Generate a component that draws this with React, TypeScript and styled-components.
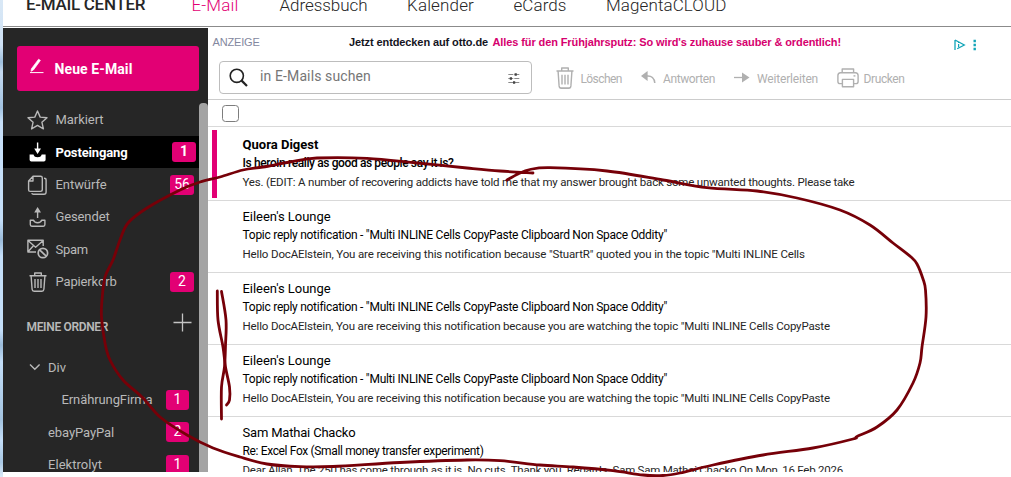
import React from 'react';
import styled, { createGlobalStyle, css } from 'styled-components';

const MAGENTA = '#e20074';

const Global = createGlobalStyle`
  * { box-sizing: border-box; }
  body { margin: 0; background: #fff; overflow: hidden; }
  svg { display: block; flex: none; }
`;

const Page = styled.div`
  position: relative;
  display: flex;
  width: 1011px;
  height: 477px;
  overflow: hidden;
  background: #fff;
  font-family: Roboto, "Liberation Sans", sans-serif;
`;

const DesktopEdge = styled.div`
  flex: none;
  width: 3px;
  background: linear-gradient(#d9e8f6 0, #cfe2f5 45px, #9fc0dd 62px, #c5daf0 72px, #b4cfe8 90px, #a2c2e0 108px,
    #c8e0f8 122px, #c4def8 220px, #9bbbd9 240px, #c4def8 256px, #c4def8 330px, #9bbbd9 345px, #c4def8 362px,
    #a3c3df 420px, #c4def8 440px, #a9c8e4 462px, #dceaf7 477px);
`;

const Window = styled.div`
  display: flex;
  flex-direction: column;
  flex: 1;
  height: 472px;
  overflow: hidden;
`;

const Header = styled.header`
  display: flex;
  flex: none;
  height: 27px;
  margin-bottom: 1px;
  padding-left: 23px;
  border-bottom: 1px solid #8b8b8b;
  overflow: hidden;
`;

const Brand = styled.div`
  width: 165.5px;
  margin-top: -6px;
  font-size: 17px;
  font-weight: 500;
  line-height: 20px;
  letter-spacing: -0.3px;
  color: #262626;
  white-space: nowrap;
`;

const NavLink = styled.a<{ $width: number; $track: number; $active?: boolean }>`
  flex: none;
  width: ${p => p.$width}px;
  margin-top: -5px;
  font-size: 17px;
  font-weight: 300;
  line-height: 20px;
  letter-spacing: ${p => p.$track}px;
  white-space: nowrap;
  color: ${p => (p.$active ? MAGENTA : '#262626')};
`;

const Body = styled.div`
  display: flex;
  flex: 1;
  min-height: 0;
`;

const Sidebar = styled.aside`
  display: flex;
  flex: none;
  width: 205px;
  background: #262626;
  color: #b9b9b9;
  overflow: hidden;
`;

const SidebarContent = styled.div`
  width: 196px;
`;

const ScrollThumb = styled.div`
  width: 9px;
  margin-top: 75px;
  height: 400px;
  border-radius: 4px 4px 0 0;
  background: #a4a4a4;
`;

const ComposeButton = styled.button`
  display: flex;
  align-items: center;
  width: 182px;
  height: 45px;
  margin: 18px 0 12.6px 14px;
  padding: 1px 0 0 12px;
  gap: 10.5px;
  border: 0;
  border-radius: 3px;
  background: ${MAGENTA};
  color: #fff;
  font: 700 14px/20px Roboto, sans-serif;
  letter-spacing: 0.1px;

  svg { margin-top: -7px; }
`;

const FolderRow = styled.div<{ $active?: boolean; $indent?: number; $badgeInset?: number }>`
  display: flex;
  align-items: center;
  height: 32.4px;
  padding-left: ${p => p.$indent ?? 24}px;
  padding-right: ${p => p.$badgeInset ?? 5}px;
  font-size: 13px;
  line-height: 18px;
  ${p => p.$active && css`
    background: #000;
    color: #fff;
    font-weight: 700;
  `}
`;

const FolderIcon = styled.span`
  display: flex;
  justify-content: center;
  width: 21px;
  margin-right: 7.5px;
`;

const FolderName = styled.span<{ $track?: number }>`
  flex: 1;
  padding-top: 1px;
  white-space: nowrap;
  letter-spacing: ${p => p.$track ?? 0}px;
`;

const FolderToggle = styled.span`
  width: 19px;
`;

const Badge = styled.span<{ $narrow?: boolean }>`
  flex: none;
  width: ${p => (p.$narrow ? 23 : 24)}px;
  height: 20px;
  border-radius: 3px;
  background: ${MAGENTA};
  color: #fff;
  font-size: 14px;
  line-height: 18px;
  text-align: center;
`;

const SectionTitle = styled.div`
  display: flex;
  align-items: center;
  justify-content: space-between;
  height: 53.3px;
  padding: 5px 7px 0 23.5px;
  font-size: 12px;
  font-weight: 600;
  letter-spacing: -0.33px;

  svg { margin-top: -9px; }
`;

const Main = styled.main`
  display: flex;
  flex-direction: column;
  flex: 1;
  min-width: 0;
  overflow: hidden;
`;

const AdBar = styled.div`
  display: flex;
  align-items: center;
  flex: none;
  height: 29px;
  padding: 0 0 2px 4.5px;
  font: 700 11px/14px "Liberation Sans", Arial, sans-serif;
  letter-spacing: -0.102px;
  white-space: nowrap;
  color: #14141e;

  svg { margin-top: 6px; }
`;

const AdLabel = styled.span`
  width: 136.5px;
  font-weight: 400;
  letter-spacing: -0.16px;
  color: #8388a0;
`;

const AdText = styled.span`
  width: 143.5px;
`;

const AdLink = styled.a`
  width: 461.5px;
  color: #d6006e;
`;

const Toolbar = styled.div`
  display: flex;
  flex: none;
  height: 43px;
  padding: 4px 0 0 11px;
  border-bottom: 1px solid #ccc;
`;

const SearchBox = styled.div`
  display: flex;
  align-items: center;
  width: 313px;
  height: 33px;
  margin-right: 24px;
  padding: 0 11px 0 9px;
  border: 1px solid #bdbdbd;
  border-radius: 4px;
`;

const Placeholder = styled.span`
  flex: 1;
  margin: -3px 0 0 12px;
  font-size: 14px;
  letter-spacing: 0.12px;
  color: #767676;
`;

const Action = styled.div<{ $width: number; $gap: number; $track: number }>`
  display: flex;
  align-items: center;
  width: ${p => p.$width}px;
  height: 33px;
  gap: ${p => p.$gap}px;
  font-size: 12px;
  letter-spacing: ${p => p.$track}px;
  white-space: nowrap;
  color: #b0b0b0;

  span { padding-top: 3px; }
`;

const SelectBar = styled.div`
  flex: none;
  height: 27px;
  padding: 5px 0 0 14px;
  border-bottom: 1px solid #d9d9d9;
`;

const Checkbox = styled.div`
  width: 17px;
  height: 17px;
  border: 1px solid #7d7d7d;
  border-radius: 3.5px;
`;

const Mail = styled.article<{ $unread?: boolean }>`
  display: flex;
  flex: none;
  height: ${p => (p.$unread ? 74 : 72)}px;
  padding-top: ${p => (p.$unread ? 3 : 1)}px;
  border-bottom: 1px solid #d9d9d9;
  color: #000;
`;

const UnreadBar = styled.div<{ $on?: boolean }>`
  flex: none;
  width: 5px;
  height: 68px;
  margin: 0 25.5px 0 4px;
  background: ${p => (p.$on ? MAGENTA : 'transparent')};
`;

const MailText = styled.div`
  padding-top: 5px;
  white-space: nowrap;
`;

const Sender = styled.div<{ $bold?: boolean; $track: number }>`
  font-size: 13px;
  line-height: 19px;
  font-weight: ${p => (p.$bold ? 700 : 400)};
  letter-spacing: ${p => p.$track}px;
`;

const Subject = styled.div<{ $bold?: boolean; $track: number }>`
  font-size: 12px;
  line-height: 18px;
  font-weight: ${p => (p.$bold ? 500 : 400)};
  letter-spacing: ${p => p.$track}px;
`;

const Preview = styled.div<{ $track: number }>`
  font-size: 11.5px;
  line-height: 21px;
  color: #262626;
  letter-spacing: ${p => p.$track}px;
`;

const PenOverlay = styled.svg`
  position: absolute;
  left: 0;
  top: 0;
  pointer-events: none;
`;

const stroke = { fill: 'none', stroke: 'currentColor', strokeWidth: 1.4, strokeLinejoin: 'round' as const };

const PenIcon = () => (
  <svg width="15" height="16" viewBox="0 0 15 16">
    <path d="M9.6 1.2 11.4 2.4 4.4 12 2 13.3 2.4 10.8Z" fill="#fff" stroke="#fff" strokeWidth=".7" />
    <path d="M1 14.6H14.5" stroke="#fff" strokeWidth="1" />
  </svg>
);
const StarIcon = () => (
  <svg width="21" height="20" viewBox="0 0 21 20">
    <path {...stroke} d="M10.5 1 13.2 7.1 20 7.7 14.9 12.2 16.4 18.9 10.5 15.4 4.6 18.9 6.1 12.2 1 7.7 7.8 7.1Z" />
  </svg>
);
const InboxIcon = () => (
  <svg width="21" height="20" viewBox="0 0 21 20" fill="currentColor">
    <path d="M9.9.5h1.4v6H14L10.6 12 7.2 6.5h2.7zM2.6 12.5H6.5C7 14.6 8.5 15.2 10.6 15.2s3.6-.6 4.1-2.7h3.9v5.3q0 1.7-1.7 1.7H4.3q-1.7 0-1.7-1.7z" />
  </svg>
);
const DraftIcon = () => (
  <svg width="21" height="20" viewBox="0 0 21 20">
    <path {...stroke} d="M6 1.3H13.5Q15.3 1.3 15.3 3V14.6Q15.3 16.4 13.5 16.4H3.4Q1.6 16.4 1.6 14.6V6ZM6 1.3V6H1.6" />
    <path {...stroke} d="M17 3.3Q19.1 3.3 19.1 5V17Q19.1 19.2 17 19.2H6.5Q5 19.2 4.9 18" />
  </svg>
);
const SentIcon = () => (
  <svg width="21" height="20" viewBox="0 0 21 20">
    <path d="M10.6 0 14 5.6H11.3V11H9.9V5.6H7.2Z" fill="currentColor" />
    <path {...stroke} d="M3.3 13.2H6.6C7 15 8.4 15.8 10.6 15.8S14.2 15 14.6 13.2H17.9V17.6Q17.9 19.2 16.3 19.2H4.9Q3.3 19.2 3.3 17.6Z" />
  </svg>
);
const SpamIcon = () => (
  <svg width="22" height="20" viewBox="0 0 22 20">
    <path {...stroke} d="M9 13H.9V1.3H16.2V7M1 1.5 8.6 8.2 16.2 1.5M1 12.8 6.2 7" />
    <circle {...stroke} cx="15.9" cy="14" r="4.7" strokeWidth="1.7" />
    <path d="M12.6 10.8 19.2 17.2" stroke="currentColor" strokeWidth="1.7" />
  </svg>
);
const TrashIcon = ({ w, h }: { w: number; h: number }) => (
  <svg width={w} height={h} viewBox="1.5 0 18 20" preserveAspectRatio="none">
    <path {...stroke} d="M2 3.7H19M7.2 3.5V1H13.8V3.5M3.6 4 4.6 17.2Q4.8 19.2 6.6 19.2H14.4Q16.2 19.2 16.4 17.2L17.4 4M7.5 7V16M10.5 7V16M13.5 7V16" />
  </svg>
);
const PlusIcon = () => (
  <svg width="19" height="19" viewBox="0 0 19 19">
    <path d="M9.5.5V18.5M.5 9.5H18.5" stroke="#c4c4c4" strokeWidth="1.3" />
  </svg>
);
const ChevronIcon = () => (
  <svg width="12" height="8" viewBox="0 0 12 8">
    <path d="M1 1.5 5.8 6.3 10.6 1.5" fill="none" stroke="#b9b9b9" strokeWidth="1.4" />
  </svg>
);
const AdChoicesIcon = () => (
  <svg width="24" height="12" viewBox="0 0 24 12">
    <path d="M1 1V11M1 1 10.3 6 3.2 9.8" fill="none" stroke="#12a5b8" strokeWidth="1.3" />
    <path d="M4.6 4.9V8.2M4.6 3V4" stroke="#12a5b8" strokeWidth="1.2" />
    <path d="M19.5 .8h2.4v2.4h-2.4zM19.5 4.8h2.4v2.4h-2.4zM19.5 8.8h2.4v2.4h-2.4z" fill="#12a5b8" />
  </svg>
);
const SearchIcon = () => (
  <svg width="19" height="19" viewBox="0 0 19 19">
    <circle cx="7.8" cy="7.8" r="6.6" fill="none" stroke="#222" strokeWidth="1.6" />
    <path d="M12.4 12.4 18 18" stroke="#222" strokeWidth="2.2" />
  </svg>
);
const FilterIcon = () => (
  <svg width="12" height="12" viewBox="0 0 12 12">
    <path d="M.3 2.5H11.7M.3 6.5H11.7M.3 10.5H11.7" stroke="#8a8a8a" strokeWidth="1" strokeDasharray="5 1" />
    <path d="M6.6 1.2H8.8V3.8H6.6zM1.8 5.2H4V7.8H1.8zM5 9.2H7.2V11.8H5z" fill="#444" />
  </svg>
);
const ReplyIcon = () => (
  <svg width="15" height="13" viewBox="0 0 15 13">
    <path d="M0 5 6.6 0V10Z" fill="#b0b0b0" />
    <path d="M6 5C10.5 4.6 13.4 7 13.8 12" fill="none" stroke="#b0b0b0" strokeWidth="1.5" />
  </svg>
);
const ForwardIcon = () => (
  <svg width="16" height="11" viewBox="0 0 16 11">
    <path d="M8 .5 15.5 5.5 8 10.5Z" fill="#b0b0b0" />
    <path d="M0 5.5H9" stroke="#b0b0b0" strokeWidth="1.3" />
  </svg>
);
const PrintIcon = () => (
  <svg width="22" height="20" viewBox="0 0 22 20">
    <g {...stroke}>
      <path d="M5.2 4.6V1H16.6V4.6M5 15.6H3.2Q.9 15.6.9 13.4V7.6Q.9 4.7 3.6 4.7H18.4Q21.1 4.7 21.1 7.6V13.4Q21.1 15.6 18.8 15.6H17" />
      <path d="M5.4 11.4H16.6V18.8H5.4Z" />
      <path d="M16.5 7.9H18.4" />
    </g>
  </svg>
);

const folders = [
  { name: 'Markiert', icon: <StarIcon />, track: -0.05 },
  { name: 'Posteingang', icon: <InboxIcon />, track: -0.14, count: '1', active: true, inset: 3 },
  { name: 'Entwürfe', icon: <DraftIcon />, track: -0.06, count: '56' },
  { name: 'Gesendet', icon: <SentIcon />, track: -0.12 },
  { name: 'Spam', icon: <SpamIcon />, track: -0.3 },
  { name: 'Papierkorb', icon: <TrashIcon w={18} h={20} />, track: -0.16, count: '2' },
];

const ownFolders = [
  { name: 'ErnährungFirma', indent: 58.5, track: -0.1, count: '1' },
  { name: 'ebayPayPal', indent: 45, track: -0.09, count: '2' },
  { name: 'Elektrolyt', indent: 45, track: 0.04, count: '1' },
];

const TOPIC = 'Topic reply notification - "Multi INLINE Cells CopyPaste Clipboard Non Space Oddity"';
const WATCHING =
  'Hello DocAElstein, You are receiving this notification because you are watching the topic "Multi INLINE Cells CopyPaste';

const mails = [
  {
    from: 'Quora Digest',
    subject: 'Is heroin really as good as people say it is?',
    preview:
      'Yes. (EDIT: A number of recovering addicts have told me that my answer brought back some unwanted thoughts. Please take',
    tracks: [0.02, -0.387, -0.198],
    unread: true,
  },
  {
    from: "Eileen's Lounge",
    subject: TOPIC,
    preview:
      'Hello DocAElstein, You are receiving this notification because "StuartR" quoted you in the topic "Multi INLINE Cells',
    tracks: [-0.045, -0.274, -0.137],
  },
  { from: "Eileen's Lounge", subject: TOPIC, preview: WATCHING, tracks: [-0.045, -0.274, -0.153] },
  { from: "Eileen's Lounge", subject: TOPIC, preview: WATCHING, tracks: [-0.045, -0.274, -0.153] },
  {
    from: 'Sam Mathai Chacko',
    subject: 'Re: Excel Fox (Small money transfer experiment)',
    preview:
      'Dear Allan, The 250 has come through as it is. No cuts. Thank you. Regards. Sam Sam Mathai Chacko On Mon, 16 Feb 2026',
    tracks: [-0.189, -0.353, -0.237],
  },
];

type Point = [number, number];

const penStrokes: Point[][] = [
  [
    [533, 173], [500, 171], [467, 168], [417, 163], [367, 158.3], [317, 158], [290, 162], [263, 167], [243, 170],
    [220, 177], [200, 182], [180, 190], [147, 208], [128, 223], [120, 240], [113, 260], [105, 277], [102, 300],
    [101.5, 317], [105, 343], [110, 360], [123, 380], [143, 398], [160, 417], [187, 435], [213, 448], [240, 457],
    [267, 464], [300, 466.7], [333, 466.5], [400, 462.5], [467, 460], [500, 460.7], [540, 465], [573, 467],
    [613, 470.7], [643, 475], [663, 475.5], [680, 473], [713, 465], [763, 455], [813, 448], [853, 439],
    [857, 436.5], [877, 427], [897, 410], [913, 383], [920, 363], [922, 347], [926, 317], [925.5, 290],
    [923, 279], [917, 264], [911, 257], [893, 243], [870, 225], [840, 210], [797, 198], [757, 191], [707, 187.7],
    [663, 180], [607, 171], [550, 167.7], [530, 169.5], [518, 174], [507, 180],
  ],
  [[217.3, 291], [218, 320], [223, 347], [225.5, 367], [229.5, 387], [229.5, 400], [226.5, 405]],
  [[221.5, 291.5], [226, 320], [225.5, 345], [224.5, 367], [221.5, 387], [221.5, 419]],
];

const smooth = (p: Point[]) =>
  p.slice(1).reduce((d, b, i) => {
    const a = p[i];
    const before = p[i - 1] ?? a;
    const after = p[i + 2] ?? b;
    const c1 = [a[0] + (b[0] - before[0]) / 6, a[1] + (b[1] - before[1]) / 6];
    const c2 = [b[0] - (after[0] - a[0]) / 6, b[1] - (after[1] - a[1]) / 6];
    return `${d}C${c1.join(' ')} ${c2.join(' ')} ${b.join(' ')}`;
  }, `M${p[0].join(' ')}`);

export default function App() {
  return (
    <Page>
      <Global />
      <DesktopEdge />
      <Window>
        <Header>
          <Brand>E-MAIL CENTER</Brand>
          <NavLink $width={88} $track={0.16} $active>E-Mail</NavLink>
          <NavLink $width={127.5} $track={-0.05}>Adressbuch</NavLink>
          <NavLink $width={106.5} $track={0.15}>Kalender</NavLink>
          <NavLink $width={92.5} $track={0.07}>eCards</NavLink>
          <NavLink $width={130} $track={0.1}>MagentaCLOUD</NavLink>
        </Header>
        <Body>
          <Sidebar>
            <SidebarContent>
              <ComposeButton><PenIcon />Neue E-Mail</ComposeButton>
              {folders.map(f => (
                <FolderRow key={f.name} $active={f.active} $badgeInset={f.inset}>
                  <FolderIcon>{f.icon}</FolderIcon>
                  <FolderName $track={f.track}>{f.name}</FolderName>
                  {f.count && <Badge>{f.count}</Badge>}
                </FolderRow>
              ))}
              <SectionTitle>MEINE ORDNER<PlusIcon /></SectionTitle>
              <FolderRow $indent={26}>
                <FolderToggle><ChevronIcon /></FolderToggle>
                <FolderName>Div</FolderName>
              </FolderRow>
              {ownFolders.map(f => (
                <FolderRow key={f.name} $indent={f.indent} $badgeInset={10}>
                  <FolderName $track={f.track}>{f.name}</FolderName>
                  <Badge $narrow>{f.count}</Badge>
                </FolderRow>
              ))}
            </SidebarContent>
            <ScrollThumb />
          </Sidebar>
          <Main>
            <AdBar>
              <AdLabel>ANZEIGE</AdLabel>
              <AdText>Jetzt entdecken auf otto.de</AdText>
              <AdLink>Alles für den Frühjahrsputz: So wird's zuhause sauber &amp; ordentlich!</AdLink>
              <AdChoicesIcon />
            </AdBar>
            <Toolbar>
              <SearchBox>
                <SearchIcon />
                <Placeholder>in E-Mails suchen</Placeholder>
                <FilterIcon />
              </SearchBox>
              <Action $width={85} $gap={6.5} $track={-0.6}><TrashIcon w={18} h={22} /><span>Löschen</span></Action>
              <Action $width={93} $gap={7} $track={-0.39}><ReplyIcon /><span>Antworten</span></Action>
              <Action $width={103} $gap={7} $track={-0.18}><ForwardIcon /><span>Weiterleiten</span></Action>
              <Action $width={80} $gap={4.5} $track={-0.39}><PrintIcon /><span>Drucken</span></Action>
            </Toolbar>
            <SelectBar><Checkbox /></SelectBar>
            {mails.map((m, i) => (
              <Mail key={i} $unread={m.unread}>
                <UnreadBar $on={m.unread} />
                <MailText>
                  <Sender $bold={m.unread} $track={m.tracks[0]}>{m.from}</Sender>
                  <Subject $bold={m.unread} $track={m.tracks[1]}>{m.subject}</Subject>
                  <Preview $track={m.tracks[2]}>{m.preview}</Preview>
                </MailText>
              </Mail>
            ))}
          </Main>
        </Body>
      </Window>
      <PenOverlay width="1011" height="477" viewBox="0 0 1011 477">
        {penStrokes.map((s, i) => (
          <path key={i} d={smooth(s)} fill="none" stroke="#760008" strokeWidth="2.8" strokeLinecap="round" strokeLinejoin="round" />
        ))}
      </PenOverlay>
    </Page>
  );
}
